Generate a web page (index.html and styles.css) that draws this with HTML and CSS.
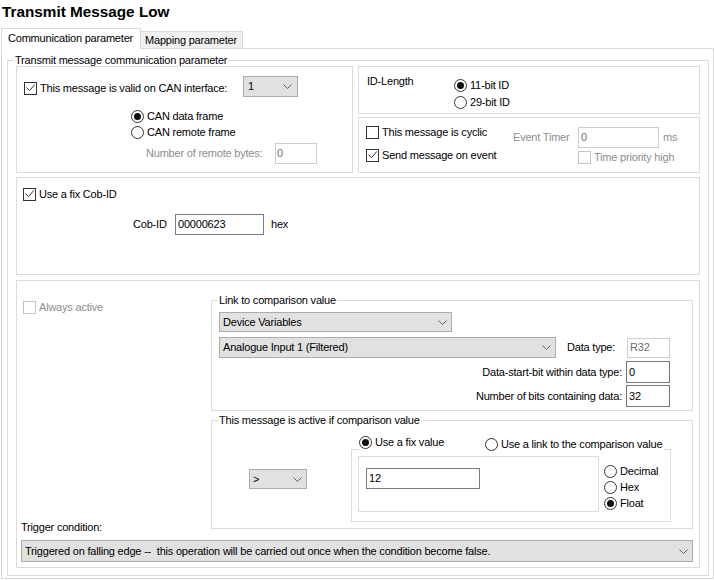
FILE: index.html
```html
<!DOCTYPE html>
<html>
<head>
<meta charset="utf-8">
<link rel="stylesheet" href="styles.css">
</head>
<body>
<div class="title">Transmit Message Low</div>
<div class="tabs">
  <div class="tab tab-active">Communication parameter</div>
  <div class="tab tab-idle">Mapping parameter</div>
</div>
<div class="page">
  <fieldset class="gb main">
    <legend>Transmit message communication parameter</legend>
    <div class="row1">
      <div class="panel pa">
        <div class="a1">
          <div class="chk a1chk"><span class="box"><svg width="11" height="11" viewBox="0 0 11 11"><path d="M1.5 4.5 L4.5 7.7 L9.7 1.5" fill="none" stroke="#333" stroke-width="1"/></svg></span>This message is valid on CAN interface:</div>
          <div class="sel s-can"><span>1</span><svg width="9" height="5" viewBox="0 0 9 5"><path d="M0.5 0.5 L4.5 4.5 L8.5 0.5" fill="none" stroke="#606060"/></svg></div>
        </div>
        <div class="a2">
          <div class="rad"><svg width="13" height="13" viewBox="0 0 13 13"><circle cx="6.5" cy="6.5" r="6" fill="#fff" stroke="#333"/><circle cx="6.5" cy="6.5" r="3.5" fill="#111"/></svg>CAN data frame</div>
          <div class="rad"><svg width="13" height="13" viewBox="0 0 13 13"><circle cx="6.5" cy="6.5" r="6" fill="#fff" stroke="#333"/></svg>CAN remote frame</div>
        </div>
        <div class="a3">
          <span class="gray lbl-rb">Number of remote bytes:</span>
          <div class="inp dis w-rb">0</div>
        </div>
      </div>
      <div class="rcol">
        <div class="panel pb">
          <div class="idlen">ID-Length</div>
          <div class="radcol">
            <div class="rad r17"><svg width="13" height="13" viewBox="0 0 13 13"><circle cx="6.5" cy="6.5" r="6" fill="#fff" stroke="#333"/><circle cx="6.5" cy="6.5" r="3.5" fill="#111"/></svg>11-bit ID</div>
            <div class="rad r17"><svg width="13" height="13" viewBox="0 0 13 13"><circle cx="6.5" cy="6.5" r="6" fill="#fff" stroke="#333"/></svg>29-bit ID</div>
          </div>
        </div>
        <div class="panel pc">
          <div class="cleft">
            <div class="chk"><span class="box"></span>This message is cyclic</div>
            <div class="chk"><span class="box"><svg width="11" height="11" viewBox="0 0 11 11"><path d="M1.5 4.5 L4.5 7.7 L9.7 1.5" fill="none" stroke="#333" stroke-width="1"/></svg></span>Send message on event</div>
          </div>
          <div class="cright">
            <span class="gray">Event Timer</span>
            <div class="inp dis w-et">0</div>
            <span class="gray ms">ms</span>
            <div class="chk dis tph"><span class="box"></span>Time priority high</div>
          </div>
        </div>
      </div>
    </div>
    <div class="panel pd">
      <div class="chk"><span class="box"><svg width="11" height="11" viewBox="0 0 11 11"><path d="M1.5 4.5 L4.5 7.7 L9.7 1.5" fill="none" stroke="#333" stroke-width="1"/></svg></span>Use a fix Cob-ID</div>
      <div class="cobrow">
        <span class="cob-lbl">Cob-ID</span>
        <div class="inp w-cob">00000623</div>
        <span class="hex">hex</span>
      </div>
    </div>
    <div class="panel pe">
      <div class="eleft">
        <div class="chk dis"><span class="box"></span>Always active</div>
        <div class="trig-lbl">Trigger condition:</div>
      </div>
      <div class="eright">
        <fieldset class="gb f1">
          <legend>Link to comparison value</legend>
          <div class="sel s-dv"><span>Device Variables</span><svg width="9" height="5" viewBox="0 0 9 5"><path d="M0.5 0.5 L4.5 4.5 L8.5 0.5" fill="none" stroke="#606060"/></svg></div>
          <div class="f1r2">
            <div class="sel s-ai"><span>Analogue Input 1 (Filtered)</span><svg width="9" height="5" viewBox="0 0 9 5"><path d="M0.5 0.5 L4.5 4.5 L8.5 0.5" fill="none" stroke="#606060"/></svg></div>
            <span class="dt-lbl">Data type:</span>
            <div class="inp dis w-dt">R32</div>
          </div>
          <div class="f1r3">
            <span>Data-start-bit within data type:</span>
            <div class="inp w-num">0</div>
          </div>
          <div class="f1r3 f1r4">
            <span>Number of bits containing data:</span>
            <div class="inp w-num">32</div>
          </div>
        </fieldset>
        <fieldset class="gb f2">
          <legend>This message is active if comparison value</legend>
          <div class="f2body">
            <div class="f2left">
              <div class="sel s-op"><span>&gt;</span><svg width="9" height="5" viewBox="0 0 9 5"><path d="M0.5 0.5 L4.5 4.5 L8.5 0.5" fill="none" stroke="#606060"/></svg></div>
            </div>
            <div class="f2right">
              <div class="radrow">
                <div class="rad rfix"><svg width="13" height="13" viewBox="0 0 13 13"><circle cx="6.5" cy="6.5" r="6" fill="#fff" stroke="#333"/><circle cx="6.5" cy="6.5" r="3.5" fill="#111"/></svg>Use a fix value</div>
                <div class="rad rlink"><svg width="13" height="13" viewBox="0 0 13 13"><circle cx="6.5" cy="6.5" r="6" fill="#fff" stroke="#333"/></svg>Use a link to the comparison value</div>
              </div>
              <div class="vbox">
                <div class="vinner">
                  <div class="inp w-val">12</div>
                </div>
                <div class="fmtcol">
                  <div class="rad"><svg width="13" height="13" viewBox="0 0 13 13"><circle cx="6.5" cy="6.5" r="6" fill="#fff" stroke="#333"/></svg>Decimal</div>
                  <div class="rad"><svg width="13" height="13" viewBox="0 0 13 13"><circle cx="6.5" cy="6.5" r="6" fill="#fff" stroke="#333"/></svg>Hex</div>
                  <div class="rad"><svg width="13" height="13" viewBox="0 0 13 13"><circle cx="6.5" cy="6.5" r="6" fill="#fff" stroke="#333"/><circle cx="6.5" cy="6.5" r="3.5" fill="#111"/></svg>Float</div>
                </div>
              </div>
            </div>
          </div>
        </fieldset>
      </div>
      <div class="sel s-trig"><span>Triggered on falling edge --&nbsp; this operation will be carried out once when the condition become false.</span><svg width="9" height="5" viewBox="0 0 9 5"><path d="M0.5 0.5 L4.5 4.5 L8.5 0.5" fill="none" stroke="#606060"/></svg></div>
    </div>
  </fieldset>
</div>
</body>
</html>
```
FILE: styles.css
```css
* { box-sizing: border-box; }
html, body { margin: 0; padding: 0; background: #fff; }
body {
  font-family: "Liberation Sans", Arial, sans-serif;
  font-size: 11px;
  line-height: 13px;
  color: #000;
  letter-spacing: -0.2px;
  width: 714px;
  height: 580px;
  overflow: hidden;
}
.title {
  font-weight: bold;
  font-size: 15.3px;
  line-height: 18px;
  letter-spacing: 0;
  height: 28px;
  padding: 3px 0 0 2px;
}
.tabs {
  display: flex;
  align-items: flex-end;
  height: 20px;
  margin-left: 1px;
  position: relative;
  z-index: 1;
}
.tab { border: 1px solid #d9d9d9; border-bottom: none; white-space: nowrap; }
.tab-active {
  width: 140px;
  height: 21px;
  margin-bottom: -1px;
  background: #fff;
  padding: 3px 0 0 6px;
  position: relative;
  z-index: 2;
}
.tab-idle {
  width: 103px;
  height: 17px;
  margin-left: -1px;
  background: #f0f0f0;
  padding: 2px 0 0 4px;
}
.page {
  margin-left: 1px;
  width: 713px;
  height: 531px;
  border: 1px solid #d9d9d9;
  padding: 5px 4px 2px 5px;
  background: #fff;
}
fieldset.gb {
  margin: 0;
  border: 1px solid #dcdcdc;
  min-width: 0;
}
fieldset.gb > legend {
  padding: 0 1px;
  line-height: 12px;
  white-space: nowrap;
}
.gb.main {
  width: 702px;
  height: 522px;
  padding: 0 8px 7px 8px;
}
.gb.main > legend { margin-left: -2px; }
.panel { border: 1px solid #dcdcdc; }

.row1 { display: flex; gap: 5px; height: 107px; }
.rcol { display: flex; flex-direction: column; gap: 3px; width: 342px; }

/* controls */
.chk { display: flex; align-items: center; gap: 3px; height: 13px; white-space: nowrap; }
.box {
  width: 13px; height: 13px; flex: none;
  border: 1px solid #333; background: #fff;
  display: flex; align-items: center; justify-content: center;
}
.box svg { display: block; }
.chk.dis { color: #8d8d8d; }
.chk.dis .box { border-color: #c4c4c4; }
.rad { display: flex; align-items: center; gap: 3px; height: 16px; white-space: nowrap; }
.rad svg { display: block; flex: none; }
.r17 { height: 17px; }
.gray { color: #8d8d8d; white-space: nowrap; }
.sel {
  display: flex; align-items: center; justify-content: space-between;
  border: 1px solid #adadad; background: #e1e1e1;
  padding: 0 4px 0 3px; white-space: nowrap;
}
.sel svg { display: block; flex: none; }
.inp {
  display: flex; align-items: center;
  border: 1px solid #7a7a7a; background: #fff;
  height: 21px; padding: 0 2px;
}
.inp.dis { border-color: #cccccc; color: #6d6d6d; }

/* panel A */
.pa { width: 337px; padding: 9px 0 0 7px; }
.a1 { display: flex; align-items: center; height: 21px; }
.a1chk { width: 219px; margin-top: 3px; }
.s-can { width: 55px; height: 21px; padding-left: 4px; padding-right: 5px; }
.a2 { display: flex; flex-direction: column; margin: 11px 0 0 107px; }
.a3 { display: flex; align-items: center; height: 21px; margin: 3px 0 0 122px; }
.lbl-rb { width: 129px; }
.w-rb { width: 42px; padding-left: 1px; }

/* panel B */
.pb { height: 48px; display: flex; padding: 10px 0 0 8px; }
.idlen { width: 87px; margin-top: -2px; }
.radcol { display: flex; flex-direction: column; }

/* panel C */
.pc { height: 56px; display: flex; align-items: flex-start; padding: 0 0 0 7px; }
.cleft { width: 147px; padding-top: 8px; display: flex; flex-direction: column; gap: 10px; }
.cright {
  display: grid;
  grid-template-columns: 65px 81px auto;
  grid-template-rows: 21px auto;
  align-items: center;
  align-content: start;
  margin-top: 9px;
}
.w-et { width: 81px; }
.ms { margin-left: 4px; }
.tph { grid-column: 2 / 4; margin-top: 3px; }

/* panel D */
.pd { height: 98px; margin-top: 4px; padding: 10px 0 0 6px; }
.cobrow { display: flex; align-items: center; height: 21px; margin: 13px 0 0 110px; }
.cob-lbl { width: 42px; }
.w-cob { width: 89px; }
.hex { margin-left: 7px; }

/* panel E */
.pe {
  height: 288px;
  margin-top: 5px;
  padding: 13px 6px 0 0;
  display: grid;
  grid-template-columns: 194px 482px;
  align-content: start;
}
.eleft {
  display: flex; flex-direction: column; justify-content: space-between;
  padding: 7px 0 0 6px;
}
.trig-lbl { margin: 0 0 -5px -2px; }
.eright { display: flex; flex-direction: column; }
.gb.f1 { width: 482px; padding: 0 22px 3px 7px; }
.gb.f1 > legend, .gb.f2 > legend { margin-left: -1px; }
.s-dv { width: 233px; height: 20px; margin-top: 6px; }
.f1r2 { display: flex; align-items: center; height: 21px; margin-top: 5px; }
.s-ai { width: 337px; height: 21px; }
.dt-lbl { margin-left: 11px; }
.w-dt { width: 43px; height: 20px; margin-left: auto; }
.f1r3 { display: flex; justify-content: flex-end; align-items: center; gap: 4px; margin-top: 3px; white-space: nowrap; }
.f1r4 { margin-top: 2px; }
.w-num { width: 44px; height: 22px; }

.gb.f2 { width: 482px; margin-top: 3px; padding: 8px 21px 6px 7px; }
.f2body { display: flex; }
.f2left { width: 132px; }
.s-op { width: 58px; height: 20px; margin: 35px 0 0 30px; }
.f2right { width: 320px; }
.radrow { display: flex; height: 15px; position: relative; z-index: 1; }
.radrow .rad { background: #fff; }
.rfix { margin-left: 8px; width: 126px; }
.rlink { margin-top: 2px; padding-right: 2px; }
.vbox {
  width: 320px; height: 73px;
  border: 1px solid #dcdcdc;
  padding: 6px;
  display: flex;
}
.vinner {
  width: 241px; height: 56px;
  border: 1px solid #dcdcdc;
  padding: 11px 0 0 7px;
}
.w-val { width: 114px; }
.fmtcol { display: flex; flex-direction: column; margin: 7px 0 0 5px; }

.s-trig { grid-column: 1 / -1; width: 672px; height: 22px; margin: 11px 0 0 4px; }
```
